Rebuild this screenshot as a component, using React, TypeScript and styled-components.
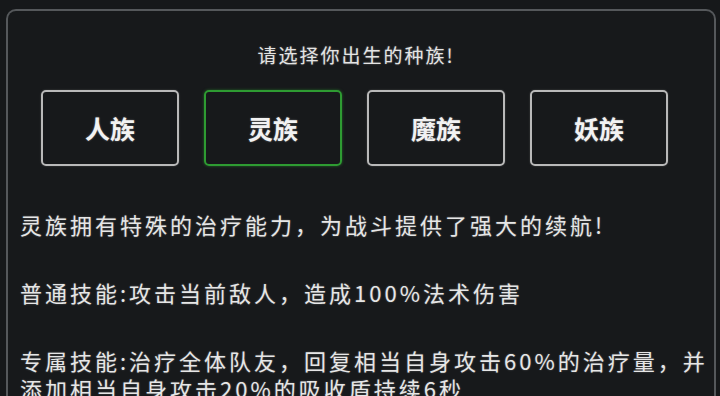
import React from "react";
import styled, { createGlobalStyle } from "styled-components";

const GlobalStyle = createGlobalStyle`
  html, body {
    margin: 0;
    padding: 0;
    background: #16181a;
    overflow: hidden;
  }
  body {
    font-family: "Noto Sans CJK SC", "Noto Sans", sans-serif;
    color: #e8e8e8;
  }
`;

const Page = styled.div`
  width: 720px;
  height: 396px;
  padding: 9px 0 0 6px;
  box-sizing: border-box;
`;

const Panel = styled.div`
  width: 710px;
  height: 420px;
  box-sizing: border-box;
  border: 2px solid #55585b;
  border-bottom: none;
  border-radius: 10px 10px 0 0;
  background: #17191b;
  padding: 30px 2px 0 12px;
`;

const Title = styled.div`
  font-size: 19px;
  line-height: 27px;
  letter-spacing: 2px;
  text-align: center;
  padding-right: 20px;
  color: #e4e4e4;
  text-shadow: 0 0 2px rgba(255, 255, 255, 0.35);
`;

const RaceRow = styled.div`
  display: flex;
  gap: 25px;
  margin-top: 22px;
  padding-left: 21px;
`;

const RaceButton = styled.div<{ $active?: boolean }>`
  width: 138px;
  height: 76px;
  box-sizing: border-box;
  display: flex;
  align-items: center;
  justify-content: center;
  border: 2px solid ${(p) => (p.$active ? "#2e9b32" : "#b9b9b9")};
  border-radius: 5px;
  box-shadow: ${(p) =>
    p.$active ? "0 0 3px rgba(46, 155, 50, 0.6)" : "0 0 2px rgba(200, 200, 200, 0.3)"};
  font-size: 25px;
  font-weight: 700;
  color: #f2f2f2;
  text-shadow: 0 0 2px rgba(255, 255, 255, 0.4);
  cursor: pointer;
`;

const Desc = styled.div`
  margin-top: 44px;
  font-size: 22px;
  line-height: 28px;
  letter-spacing: 3px;
  color: #e6e6e6;
  text-shadow: 0 0 2px rgba(255, 255, 255, 0.3);
`;

const Para = styled.p`
  margin: 0 0 40px 0;
`;

const races = ["人族", "灵族", "魔族", "妖族"];

const App = () => {
  const [selected, setSelected] = React.useState<number>(1);

  return (
    <Page>
      <GlobalStyle />
      <Panel>
        <Title>请选择你出生的种族!</Title>
        <RaceRow>
          {races.map((name, i) => (
            <RaceButton key={name} $active={i === selected} onClick={() => setSelected(i)}>
              {name}
            </RaceButton>
          ))}
        </RaceRow>
        <Desc>
          <Para>灵族拥有特殊的治疗能力，为战斗提供了强大的续航!</Para>
          <Para>普通技能:攻击当前敌人，造成100%法术伤害</Para>
          <Para>
            专属技能:治疗全体队友，回复相当自身攻击60%的治疗量，并添加相当自身攻击20%的吸收盾持续6秒
          </Para>
        </Desc>
      </Panel>
    </Page>
  );
};

export default App;
